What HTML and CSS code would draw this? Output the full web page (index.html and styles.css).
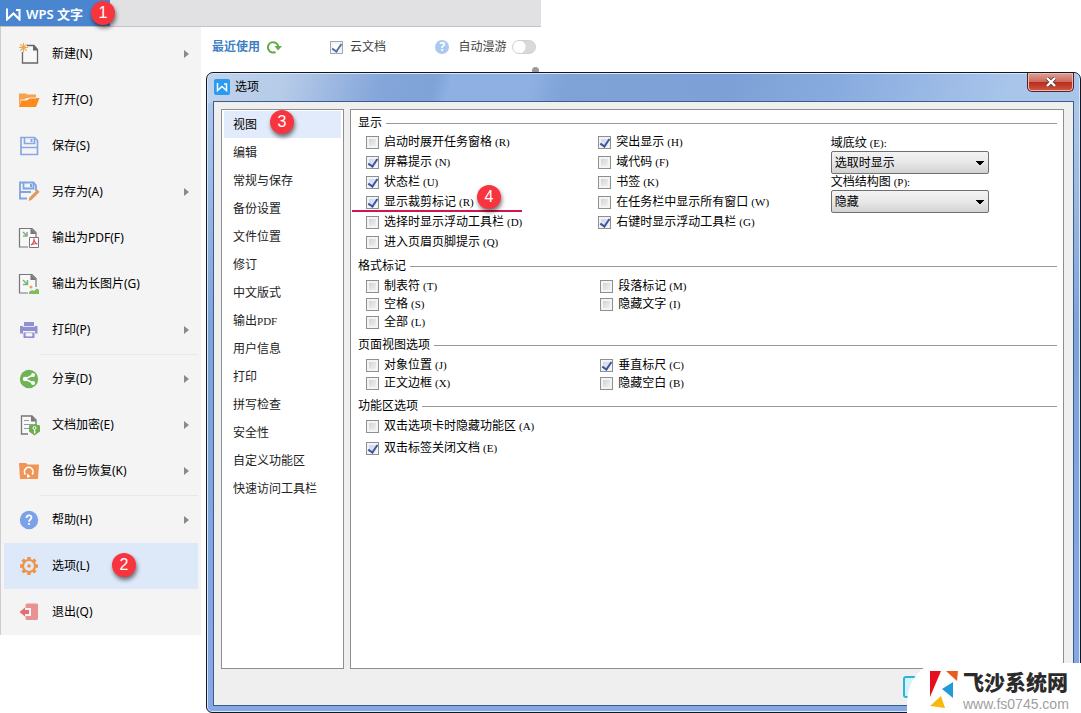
FILE: index.html
```html
<!DOCTYPE html>
<html lang="zh-CN">
<head>
<meta charset="utf-8">
<title>选项</title>
<link rel="stylesheet" href="styles.css">
</head>
<body>
<div class="desktop">
  <main class="app">
    <header class="app-bar">
      <div class="app-tab">
        <svg class="app-logo" viewBox="0 0 15 13" width="15" height="13"><path d="M1 .5v11L7.500 5.500 13.500 11.500V2H10" fill="none" stroke="#fff" stroke-width="2"/></svg>
        WPS 文字
        <span class="badge badge-tab">1</span>
      </div>
    </header>
    <div class="app-body">
      <nav class="menu">
        <button class="menu-item has-sub"><svg viewBox="0 0 22 22"><path d="M9 2.500h7l3.500 4v13.500H4.500V9" fill="#f8f8f8" stroke="#666" stroke-width="1.300"/><path d="M15 2v5.500h5z" fill="#666"/><path d="M5.500 0v9M1 4.500h9M2.300 1.300l6.400 6.400M8.700 1.300L2.300 7.700" stroke="#eda64d" stroke-width="1.200"/></svg><span>新建(N)</span></button>
        <button class="menu-item"><svg viewBox="0 0 22 22"><path d="M1 18V4.500h7l1.500 1H18v3.500H8.500L6 11H3z" fill="#f7a050"/><path d="M1 18l2.500-7h6l2.500-2H21.500L18 18z" fill="#ff8a1c"/><path d="M2.500 11h6.500l2-2h7" fill="none" stroke="#fff" stroke-width=".8"/></svg><span>打开(O)</span></button>
        <button class="menu-item"><svg viewBox="0 0 22 22"><path d="M3 2.500h13.500l3 3v14H3zM6.500 3v5.500h10V3M3 12.500h16.500" fill="none" stroke="#86a8e4" stroke-width="1.700"/><path d="M12.500 4h2v3h-2z" fill="#86a8e4"/></svg><span>保存(S)</span></button>
        <button class="menu-item has-sub"><svg viewBox="0 0 22 22"><path d="M9 17.500H2V1.500h13.500l2.500 3V10M5.500 2v5.500h10V2M2 11h11" fill="none" stroke="#7fa4e4" stroke-width="1.800"/><path d="M12 3h2v3h-2z" fill="#7fa4e4"/><path d="M10.500 20l1-3.500 8-8 2 2.500-8 8z" fill="#e39a55"/></svg><span>另存为(A)</span></button>
        <button class="menu-item"><svg viewBox="0 0 22 22"><path d="M10 20H1.500V1.500H14l4 4V10" fill="#f8f8f8" stroke="#777" stroke-width="1.200"/><path d="M12.500 1v6h6z" fill="#777"/><path d="M5 5l3 3M9 5v4H5" fill="none" stroke="#83ad83" stroke-width="1.500"/><path d="M11.500 10.500h9v10h-9z" fill="#fff" stroke="#777"/><path d="M13 18c2-1 3-3 3-6.500 0 3.500 1.500 5 3.500 5.500-2-.500-4-.500-6.500 1z" fill="none" stroke="#d65151" stroke-width="1.200"/></svg><span>输出为PDF(F)</span></button>
        <button class="menu-item"><svg viewBox="0 0 22 22"><path d="M10 20H1.500V1.500H14l4 4V14" fill="#f8f8f8" stroke="#777" stroke-width="1.200"/><path d="M12.500 1v6h6z" fill="#777"/><path d="M5 7l4 4M9.500 7v4.500H5" fill="none" stroke="#7bb17b" stroke-width="1.500"/><circle cx="13" cy="14" r="1.600" fill="#f0a060"/><path d="M11 21v-2l3-2 2 1 3-2.500 2 1.500v4z" fill="#7fbb5f"/></svg><span>输出为长图片(G)</span></button>
        <button class="menu-item has-sub"><svg viewBox="0 0 22 22"><path d="M6 3h10v4h3.500v7.500H17V12H5v2.500H2V7h4z" fill="#9290d2"/><path d="M5.500 13.500h11V19h-11z" fill="#9290d2"/><path d="M8 14.500h6v2.500H8zM5 7.500h12" fill="#f4f4f4" stroke="#f4f4f4" stroke-width=".8"/></svg><span>打印(P)</span></button>
        <hr class="menu-line">
        <button class="menu-item has-sub"><svg viewBox="0 0 22 22"><circle cx="11" cy="11" r="9.200" fill="#6fb356"/><path d="M15 7l-8 4 8 4" fill="none" stroke="#fff" stroke-width="1.500"/><g fill="#fff"><circle cx="15" cy="7" r="2"/><circle cx="7" cy="11" r="2.200"/><circle cx="15" cy="15" r="2"/></g></svg><span>分享(D)</span></button>
        <button class="menu-item has-sub"><svg viewBox="0 0 22 22"><path d="M10 20H3.500V2H14l4 4v5" fill="#f8f8f8" stroke="#777" stroke-width="1.300"/><path d="M13 1.500v6h5.500z" fill="#777"/><path d="M6 6h5v1H6zM6 10h9v1H6zM6 14h5v1H6z" fill="#9a96b4"/><path d="M11 11.500l5.500-1.500 5.500 1.500v6L16.500 21.500 11 17.500z" fill="#6eae4e"/><circle cx="16.500" cy="14" r="1.500" fill="none" stroke="#fff"/><path d="M16.500 15.500v4M16.500 18h1.500" stroke="#fff"/></svg><span>文档加密(E)</span></button>
        <button class="menu-item has-sub"><svg viewBox="0 0 22 22"><path d="M1 3h7l1.500 1.500H21L20 19H2z" fill="#f09555"/><path d="M7.500 14.500a4.300 4.300 0 1 1 6.500 0" fill="none" stroke="#fff" stroke-width="1.600"/><path d="M9 13.500l3.500 3-3.500 1.500z" fill="#fff"/></svg><span>备份与恢复(K)</span></button>
        <hr class="menu-line">
        <button class="menu-item has-sub"><svg viewBox="0 0 22 22"><circle cx="11" cy="11" r="9.200" fill="#7ba2e8"/><path d="M8.500 9c0-3.500 5-3.500 5-.500 0 2-2.500 2-2.500 4.200M11 14v2" fill="none" stroke="#fff" stroke-width="1.700"/></svg><span>帮助(H)</span></button>
        <button class="menu-item is-active"><svg viewBox="0 0 22 22"><path d="M11 2v3M11 17v3M2 11h3M17 11h3M4.600 4.600l2.200 2.200M15.200 15.200l2.200 2.200M4.600 17.400l2.200-2.200M15.200 6.800l2.200-2.200" stroke="#ec9448" stroke-width="3.400"/><circle cx="11" cy="11" r="6" fill="#dde8f8" stroke="#ec9448" stroke-width="2.200"/><circle cx="11" cy="11" r="1.800" fill="#ec9448"/></svg><span>选项(L)</span><span class="badge badge-options">2</span></button>
        <button class="menu-item"><svg viewBox="0 0 22 22"><path d="M9 2.500h9.500q1.500 0 1.500 1.500V17.500q0 1.500-1.500 1.500H9q-1.500 0-1.500-1.500V15H13V7H7.500V4q0-1.500 1.500-1.500z" fill="#e99294"/><path d="M1.500 11L7 6.500V9h4v4H7v2.500z" fill="#e26e72"/></svg><span>退出(Q)</span></button>
      </nav>
      <div class="recent">
        <a class="recent-title" href="#">最近使用</a>
        <svg class="refresh" viewBox="0 0 16 14" width="16" height="14"><path d="M9.500 12a5.200 5.200 0 1 1 2.700-6" fill="none" stroke="#62ac48" stroke-width="2"/><path d="M8.500 6h7.500l-4 4.500z" fill="#62ac48"/></svg>
        <label class="cloud"><input class="tick tick-flat" type="checkbox" checked>云文档</label>
        <label class="roam"><span class="help">?</span>自动漫游<input class="switch" type="checkbox" role="switch"></label>
        <span class="scroll-dot"></span>
      </div>
    </div>
  </main>

  <section class="dialog" role="dialog" aria-labelledby="dialog-title">
    <header class="title-bar">
      <svg viewBox="0 0 16 16" width="16" height="16"><rect width="16" height="16" rx="2" fill="#2a9bf0"/><path d="M3.500 4v7.500L8 7.500l4.500 4V5H10" fill="none" stroke="#fff" stroke-width="1.500"/></svg>
      <h1 id="dialog-title">选项</h1>
      <button class="close" aria-label="关闭"><svg viewBox="0 0 12 10" width="12" height="10"><path d="M2 1l8 8M10 1L2 9" stroke="#6b3a3a" stroke-width="4"/><path d="M2 1l8 8M10 1L2 9" stroke="#fff" stroke-width="2.400"/></svg></button>
    </header>
    <div class="dialog-body">
      <nav class="tabs">
        <button class="tab is-current">视图<span class="badge badge-view">3</span></button>
        <button class="tab">编辑</button>
        <button class="tab">常规与保存</button>
        <button class="tab">备份设置</button>
        <button class="tab">文件位置</button>
        <button class="tab">修订</button>
        <button class="tab">中文版式</button>
        <button class="tab">输出<span class="latin">PDF</span></button>
        <button class="tab">用户信息</button>
        <button class="tab">打印</button>
        <button class="tab">拼写检查</button>
        <button class="tab">安全性</button>
        <button class="tab">自定义功能区</button>
        <button class="tab">快速访问工具栏</button>
      </nav>
      <form class="panel">
        <fieldset class="group">
          <legend>显示</legend>
          <div class="columns rows-20">
            <div class="column">
              <label><input class="tick" type="checkbox">启动时展开任务窗格<span class="key">(R)</span></label>
              <label><input class="tick" type="checkbox" checked>屏幕提示<span class="key">(N)</span></label>
              <label><input class="tick" type="checkbox" checked>状态栏<span class="key">(U)</span></label>
              <label class="marked"><input class="tick" type="checkbox" checked>显示裁剪标记<span class="key">(R)</span><span class="badge badge-crop">4</span></label>
              <label><input class="tick" type="checkbox">选择时显示浮动工具栏<span class="key">(D)</span></label>
              <label><input class="tick" type="checkbox">进入页眉页脚提示<span class="key">(Q)</span></label>
            </div>
            <div class="column">
              <label><input class="tick" type="checkbox" checked>突出显示<span class="key">(H)</span></label>
              <label><input class="tick" type="checkbox">域代码<span class="key">(F)</span></label>
              <label><input class="tick" type="checkbox">书签<span class="key">(K)</span></label>
              <label><input class="tick" type="checkbox">在任务栏中显示所有窗口<span class="key">(W)</span></label>
              <label><input class="tick" type="checkbox" checked>右键时显示浮动工具栏<span class="key">(G)</span></label>
            </div>
            <div class="choices">
              <label for="shade">域底纹<span class="key">(E):</span></label>
              <select id="shade"><option>选取时显示</option></select>
              <label for="map">文档结构图<span class="key">(P):</span></label>
              <select id="map"><option>隐藏</option></select>
            </div>
          </div>
        </fieldset>
        <fieldset class="group">
          <legend>格式标记</legend>
          <div class="columns">
            <div class="column">
              <label><input class="tick" type="checkbox">制表符<span class="key">(T)</span></label>
              <label><input class="tick" type="checkbox">空格<span class="key">(S)</span></label>
              <label><input class="tick" type="checkbox">全部<span class="key">(L)</span></label>
            </div>
            <div class="column inset">
              <label><input class="tick" type="checkbox">段落标记<span class="key">(M)</span></label>
              <label><input class="tick" type="checkbox">隐藏文字<span class="key">(I)</span></label>
            </div>
          </div>
        </fieldset>
        <fieldset class="group">
          <legend>页面视图选项</legend>
          <div class="columns">
            <div class="column">
              <label><input class="tick" type="checkbox">对象位置<span class="key">(J)</span></label>
              <label><input class="tick" type="checkbox">正文边框<span class="key">(X)</span></label>
            </div>
            <div class="column inset">
              <label><input class="tick" type="checkbox" checked>垂直标尺<span class="key">(C)</span></label>
              <label><input class="tick" type="checkbox">隐藏空白<span class="key">(B)</span></label>
            </div>
          </div>
        </fieldset>
        <fieldset class="group">
          <legend>功能区选项</legend>
          <div class="columns rows-22">
            <div class="column">
              <label><input class="tick" type="checkbox">双击选项卡时隐藏功能区<span class="key">(A)</span></label>
              <label><input class="tick" type="checkbox" checked>双击标签关闭文档<span class="key">(E)</span></label>
            </div>
          </div>
        </fieldset>
      </form>
    </div>
    <footer class="dialog-foot"><button class="confirm" aria-label="确定"></button></footer>
  </section>

  <aside class="site">
    <svg viewBox="0 0 32 40" width="32" height="40"><path d="M3 1h11L3 27z" fill="#e60f1e"/><path d="M19 1h12l-1 10z" fill="#ea5b1c"/><path d="M15 19l11-7v16z" fill="#239bd8"/><path d="M3 36l11-10 4 12z" fill="#f8b90f"/></svg>
    <div class="site-text"><strong>飞沙系统网</strong><span>www.fs0745.com</span></div>
  </aside>
</div>
</body>
</html>
```
FILE: styles.css
```css
* { box-sizing: border-box; }
body {
  margin: 0;
  background: #fff;
  color: #000;
  font: 12px/16px "Noto Sans", "Noto Sans CJK SC", sans-serif;
}
button, select, input { margin: 0; font: inherit; color: inherit; }
button { border: 0; background: none; padding: 0; text-align: left; }
.desktop { position: relative; min-height: 100vh; overflow: hidden; }

/* Application window */
.app { width: 50%; }
.app-bar { display: flex; height: 27px; background: #e1e1e3; border-bottom: 1px solid #c4c4c6; }
.app-tab {
  position: relative;
  display: flex;
  align-items: center;
  gap: 5px;
  width: 110px;
  padding: 2px 0 0 6px;
  background: #4a86cf;
  color: #fff;
  font-size: 13px;
  font-weight: 600;
  white-space: nowrap;
}
.app-body { display: flex; }
.menu {
  flex: none;
  width: 201px;
  padding: 4px 3px 0;
  background: #f4f4f4;
  border-left: 1px solid #cdcdcd;
}
.menu-item {
  position: relative;
  display: flex;
  align-items: center;
  gap: 12px;
  width: 100%;
  height: 46px;
  padding-left: 14px;
}
.menu-item svg { width: 22px; height: 22px; }
.menu-item.is-active { background: #dde8f8; }
.has-sub::after {
  content: "";
  margin-left: auto;
  margin-right: 9px;
  border: 4px solid transparent;
  border-left: 5px solid #8a8a8a;
  border-right: 0;
}
.menu-line { margin: 1px 0 1px 36px; border: 0; border-top: 1px solid #e6e8ea; }
.recent {
  position: relative;
  display: flex;
  flex: 1;
  align-items: center;
  height: 40px;
  padding: 0 5px 0 11px;
  color: #444;
  white-space: nowrap;
}
.recent-title { color: #3f7fc4; font-weight: 600; text-decoration: none; }
.refresh { margin-left: 6px; }
.cloud { display: flex; align-items: center; gap: 7px; margin-left: 48px; }
.roam { display: flex; align-items: center; gap: 5px; margin-left: auto; }
.help {
  width: 14px;
  height: 14px;
  margin-right: 4px;
  border-radius: 50%;
  background: #a9c9ee;
  color: #fff;
  font-weight: 700;
  line-height: 14px;
  text-align: center;
}
.switch {
  appearance: none;
  width: 24px;
  height: 14px;
  border: 1px solid #d0d0d0;
  border-radius: 7px;
  background: radial-gradient(circle at 6px 6px, #fff 6px, #d9d9d9 7px);
}
.scroll-dot {
  position: absolute;
  right: 2px;
  bottom: -7px;
  width: 7px;
  height: 7px;
  border-radius: 50%;
  background: #999;
}

/* Numbered markers */
.badge {
  position: absolute;
  z-index: 2;
  width: 24px;
  height: 24px;
  border-radius: 50%;
  background: #f8353f;
  box-shadow: 1px 3px 4px #0008;
  color: #fff;
  font: 16px/24px "Liberation Sans", sans-serif;
  text-align: center;
}
.badge-tab { left: 91px; top: 1px; }
.badge-options { left: 108px; top: 10px; }
.badge-view { left: 46px; top: -1px; }
.badge-crop { left: 111px; top: -7px; }

/* Options dialog */
.dialog {
  position: absolute;
  inset: 72px 0 0 206px;
  display: flex;
  flex-direction: column;
  padding: 0 6px 6px;
  border: 1px solid #101828;
  border-radius: 7px 7px 6px 6px;
  background:
    linear-gradient(105deg, #c0d3ec 0, #b6cbe8 9%, #84a6da 20%, #7fa2d7 26%, #8eb0e2 28%, #8eb0e2 37%, #7fa2d7 41%, #7da0d6 60%, #88abdf 72%, #a9c5ea 92%, #a9c5ea 100%) 0 0 / 100% 30px no-repeat,
    linear-gradient(#b4cceb, #7da3d8 40%, #86a8e4);
  box-shadow: inset 0 0 0 1px #d8e7f8;
  font-family: "Liberation Sans", "Noto Sans CJK SC", sans-serif;
}
.title-bar { display: flex; align-items: center; gap: 5px; height: 28px; padding-left: 1px; }
.title-bar h1 { margin: 0; font-size: 12px; font-weight: 400; }
.close {
  align-self: flex-start;
  display: flex;
  align-items: center;
  justify-content: center;
  width: 47px;
  height: 19px;
  margin-left: auto;
  border: 1px solid #4f2430;
  border-top: 0;
  border-radius: 0 0 5px 5px;
  background: linear-gradient(#dba196, #cf6a5c 48%, #b52a1c 50%, #cf5940);
  box-shadow: inset 0 0 0 1px #f0b8ae;
}
.dialog-body {
  flex: 1;
  display: flex;
  gap: 6px;
  padding: 7px 9px 0 7px;
  border: 1px solid #3c5c8c;
  border-bottom: 0;
  background: #efefef;
}
.dialog-foot {
  display: flex;
  justify-content: flex-end;
  height: 37px;
  padding: 7px 77px 0 0;
  border: 1px solid #3c5c8c;
  border-top: 0;
  background: #efefef;
}
.confirm { width: 93px; height: 22px; border: 2px solid #2fb4d8; border-radius: 3px; background: #d5f3fb; }
.tabs { flex: none; width: 123px; padding: 1px 2px; border: 1px solid #8e8f8f; background: #fff; }
.tab { position: relative; display: block; width: 100%; height: 28px; padding-left: 9px; color: #222; }
.tab.is-current { height: 27px; margin-bottom: 1px; background: #e2ebfb; color: #000; }
.key, .latin { font: 11px/16px "Liberation Serif", serif; }
.key { margin-left: 3px; }

.panel { flex: 1; min-width: 0; padding: 5px 0 0 7px; border: 1px solid #8e8f8f; background: #fff; }
.group { min-width: 0; margin: 0 0 6px; padding: 0; border: 0; }
.group legend { display: flex; align-items: center; gap: 4px; width: 100%; height: 16px; padding: 0 6px 0 0; }
.group legend::after { content: ""; flex: 1; border-top: 1px solid #999; }
.columns { display: grid; grid-template-columns: repeat(3, 1fr); padding: 3px 0 0 8px; }
.column { display: flex; flex-direction: column; white-space: nowrap; }
.column label { position: relative; display: flex; align-items: center; height: 18px; }
.column.inset { padding-left: 2px; }
.columns.rows-20, .columns.rows-22 { padding-top: 1px; }
.rows-20 .column label { height: 20px; }
.rows-22 .column label { height: 22px; }
.tick {
  appearance: none;
  flex: none;
  width: 13px;
  height: 13px;
  margin-right: 5px;
  border: 1px solid #8e8f8f;
  background: linear-gradient(135deg, #c8ccd0, #f8f8f8);
  box-shadow: inset 0 0 0 2px #f4f4f4;
}
.tick:checked { background: linear-gradient(135deg, #c4d0ec, #eef2fb); }
.tick:checked::after {
  content: "";
  display: block;
  width: 4px;
  height: 8px;
  margin: 0 0 0 3px;
  border: solid #3c559c;
  border-width: 0 2px 2px 0;
  transform: rotate(35deg);
}
.tick-flat, .tick-flat:checked { margin: 0; border-color: #9aa9bb; background: #fff; }
.tick-flat:checked::after { border-color: #55759f; }
.marked::after {
  content: "";
  position: absolute;
  left: -14px;
  top: 18px;
  width: 170px;
  height: 2px;
  background: #d2144f;
}
.choices { display: flex; flex-direction: column; padding-top: 3px; }
.choices label { height: 16px; }
.choices select {
  appearance: none;
  width: 158px;
  height: 23px;
  padding: 0 3px;
  border: 1px solid #707070;
  border-radius: 2px;
  background:
    linear-gradient(to bottom left, #000 50%, transparent 51%) 144px 9px / 4px 4px no-repeat,
    linear-gradient(to bottom right, #000 50%, transparent 51%) 148px 9px / 4px 4px no-repeat,
    linear-gradient(#f3f3f3, #e8e8e8 50%, #d2d2d2);
}

/* Site mark in the corner */
.site {
  position: absolute;
  right: 0;
  bottom: 0;
  display: flex;
  gap: 4px;
  width: 174px;
  height: 50px;
  padding: 3px 0 0 20px;
  border-top-left-radius: 32px 40px;
  background: #fff;
}
.site svg { margin-top: 4px; }
.site-text { display: flex; flex-direction: column; color: #a0a0a0; font: 14px/16px "Liberation Sans", sans-serif; }
.site-text strong { color: #2b2b2b; font: 900 21px/30px "Noto Sans CJK SC", sans-serif; }
```
